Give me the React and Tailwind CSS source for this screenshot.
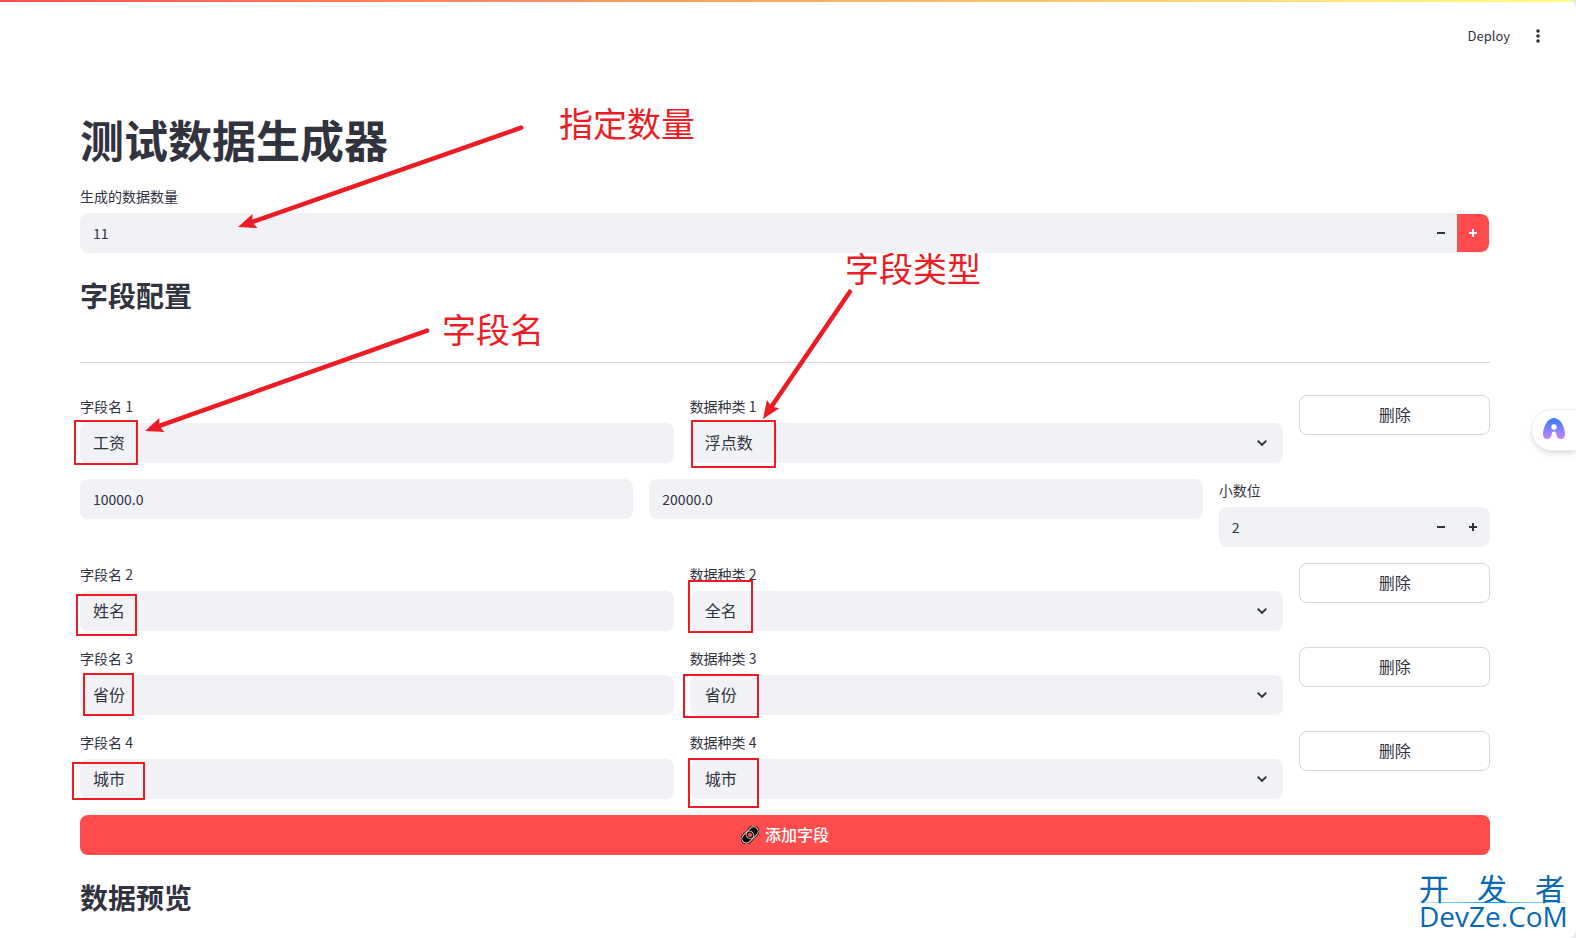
import React, { useState } from 'react';

const KINDS = ['浮点数', '全名', '省份', '城市'];

const INITIAL_FIELDS = [
    { id: 1, name: '工资', kind: '浮点数', min: '10000.0', max: '20000.0', digits: 2 },
    { id: 2, name: '姓名', kind: '全名' },
    { id: 3, name: '省份', kind: '省份' },
    { id: 4, name: '城市', kind: '城市' },
];

const MARK_BOXES = [
    { x: 74, y: 420, w: 64, h: 45 },
    { x: 691, y: 420, w: 85, h: 48 },
    { x: 76, y: 594, w: 61, h: 42 },
    { x: 688, y: 580, w: 65, h: 53 },
    { x: 83, y: 673, w: 51, h: 43 },
    { x: 683, y: 674, w: 76, h: 44 },
    { x: 72, y: 762, w: 73, h: 38 },
    { x: 688, y: 758, w: 71, h: 50 },
];

const MARK_ARROWS = [
    { from: [523, 127], to: [238, 227] },
    { from: [429, 330], to: [145, 431] },
    { from: [851, 290], to: [763, 419] },
];

const inputClass = 'h-10 w-full rounded-lg bg-[#f0f2f6] px-[13px] outline-none';

const Label = ({ htmlFor, children }) => (
    <label htmlFor={htmlFor} className="mb-1.5 block text-sm leading-[22px]">
        {children}
    </label>
);

const Stepper = ({ id, label, value, onChange, active }) => (
    <div>
        <Label htmlFor={id}>{label}</Label>
        <div className="flex h-10 overflow-hidden rounded-lg border border-[#f0f2f6] bg-[#f0f2f6]">
            <input
                id={id}
                type="text"
                inputMode="numeric"
                className="min-w-0 flex-1 bg-transparent px-3 text-sm outline-none"
                value={value}
                onChange={(e) => onChange(Number(e.target.value) || 0)}
            />
            <button
                type="button"
                aria-label="减少"
                className="flex w-8 items-center justify-center"
                onClick={() => onChange(value - 1)}
            >
                <svg width="8" height="8" viewBox="0 0 8 8" fill="currentColor">
                    <path d="M0 3h8v2H0z" />
                </svg>
            </button>
            <button
                type="button"
                aria-label="增加"
                className={active
                    ? 'flex w-8 items-center justify-center rounded-r-lg bg-[#ff4b4b] text-white'
                    : 'flex w-8 items-center justify-center'}
                onClick={() => onChange(value + 1)}
            >
                <svg width="8" height="8" viewBox="0 0 8 8" fill="currentColor">
                    <path d="M3 0h2v3h3v2H5v3H3V5H0V3h3z" />
                </svg>
            </button>
        </div>
    </div>
);

const FieldRow = ({ field, index, onChange, onRemove }) => (
    <div className="flex gap-4">
        <div className="min-w-0 flex-[1_1_calc(42.857%-16px)]">
            <Label htmlFor={`name-${field.id}`}>字段名 {index + 1}</Label>
            <input
                id={`name-${field.id}`}
                type="text"
                className={`${inputClass} pb-0.5`}
                value={field.name}
                onChange={(e) => onChange({ name: e.target.value })}
            />
        </div>
        <div className="min-w-0 flex-[1_1_calc(42.857%-16px)]">
            <Label htmlFor={`kind-${field.id}`}>数据种类 {index + 1}</Label>
            <div className="relative">
                <select
                    id={`kind-${field.id}`}
                    className="h-10 w-full appearance-none rounded-lg bg-[#f0f2f6] pr-10 pb-0.5 pl-[15px] outline-none"
                    value={field.kind}
                    onChange={(e) => onChange({ kind: e.target.value })}
                >
                    {KINDS.map((kind) => (
                        <option key={kind} value={kind}>{kind}</option>
                    ))}
                </select>
                <svg
                    className="pointer-events-none absolute top-4 right-4"
                    width="10"
                    height="8"
                    viewBox="0 0 10 8"
                    fill="none"
                    stroke="currentColor"
                    strokeWidth="2"
                >
                    <path d="M.7 1.600 5 5.900l4.300-4.300" />
                </svg>
            </div>
        </div>
        <div className="min-w-0 flex-[1_1_calc(14.286%-16px)]">
            <button
                type="button"
                className="h-10 w-full rounded-lg border border-[#d6d6d9] bg-white pb-0.5"
                onClick={onRemove}
            >
                删除
            </button>
        </div>
    </div>
);

const RangeRow = ({ field, onChange }) => (
    <div className="flex gap-4">
        <div className="min-w-0 flex-[1_1_calc(40%-16px)]">
            <input
                type="text"
                aria-label="最小值"
                className={`${inputClass} text-sm`}
                value={field.min}
                onChange={(e) => onChange({ min: e.target.value })}
            />
        </div>
        <div className="min-w-0 flex-[1_1_calc(40%-16px)]">
            <input
                type="text"
                aria-label="最大值"
                className={`${inputClass} text-sm`}
                value={field.max}
                onChange={(e) => onChange({ max: e.target.value })}
            />
        </div>
        <div className="min-w-0 flex-[1_1_calc(20%-16px)]">
            <Stepper
                id={`digits-${field.id}`}
                label="小数位"
                value={field.digits}
                onChange={(digits) => onChange({ digits })}
            />
        </div>
    </div>
);

const ChainIcon = () => (
    <svg className="mt-0.5" width="18" height="18" viewBox="0 0 18 18" fill="none">
        <g transform="rotate(-45 9 9)">
            <rect x="-1.800" y="3.200" width="14.500" height="11.600" rx="5.800" fill="#000" />
            <rect x="5.300" y="3.200" width="14.500" height="11.600" rx="5.800" fill="#000" />
            <rect x="-.6" y="4.500" width="13" height="9" rx="4.500" stroke="#d4d4d4" strokeWidth="1.100" />
            <rect x="5.600" y="4.500" width="13" height="9" rx="4.500" stroke="#d4d4d4" strokeWidth="1.100" />
            <circle cx="9" cy="9" r="2.700" fill="#ff4b4b" stroke="#000" strokeWidth=".8" />
        </g>
    </svg>
);

const Arrow = ({ from, to }) => {
    const dx = from[0] - to[0];
    const dy = from[1] - to[1];
    const length = Math.hypot(dx, dy);
    const angle = (Math.atan2(dy, dx) * 180) / Math.PI;

    return (
        <g transform={`translate(${to[0]} ${to[1]}) rotate(${angle})`}>
            <path d={`M13 0H${length - 2}`} stroke="#ed1c24" strokeWidth="4.500" strokeLinecap="round" />
            <path d="M0 0 18-7.500 15 0l3 7.500z" fill="#ed1c24" />
        </g>
    );
};

const Annotations = () => (
    <div className="pointer-events-none absolute inset-0 overflow-hidden text-[34px] leading-10 text-[#ed1c24]">
        <svg className="absolute inset-0 h-full w-full" fill="none">
            {MARK_BOXES.map((box) => (
                <rect
                    key={`${box.x}-${box.y}`}
                    x={box.x + 1}
                    y={box.y + 1}
                    width={box.w - 2}
                    height={box.h - 2}
                    stroke="#ed1c24"
                    strokeWidth="2"
                />
            ))}
            {MARK_ARROWS.map((arrow) => (
                <Arrow key={arrow.to[0]} from={arrow.from} to={arrow.to} />
            ))}
        </svg>
        <span className="absolute top-[103px] left-[559px]">指定数量</span>
        <span className="absolute top-[248px] left-[845px]">字段类型</span>
        <span className="absolute top-[309px] left-[442px]">字段名</span>
    </div>
);

const Assistant = () => (
    <button
        type="button"
        aria-label="助手"
        className="absolute top-[409px] right-0 flex h-[42px] w-[45px] items-center rounded-l-full border border-r-0 border-[#ececf4] bg-white pb-1 pl-[11px] shadow-md"
    >
        <svg width="22" height="21" viewBox="0 0 22 21">
            <defs>
                <linearGradient id="assistant" x1="0" y1="0" x2="0" y2="1">
                    <stop offset="0" stopColor="#2f7bff" />
                    <stop offset="1" stopColor="#c685ff" />
                </linearGradient>
            </defs>
            <path
                d="M11 0C5 0 0 8.500 0 16.500 0 19.500 1.800 21 4 21s4-1.500 4.500-4c.3-2.500.8-3.500 2.500-3.500s2.200 1 2.500 3.500c.5 2.500 2.300 4 4.500 4s4-1.500 4-4.500C22 8.500 17 0 11 0z"
                fill="url(#assistant)"
            />
            <circle cx="11" cy="9" r="2.700" fill="#fff" />
        </svg>
    </button>
);

const Watermark = () => (
    <div className="absolute right-[11px] bottom-[9px] w-[146px] text-[#0768b8]">
        <div className="flex justify-between text-[30px] leading-[30px]">
            <span>开</span>
            <span>发</span>
            <span>者</span>
        </div>
        <div className="h-px bg-gradient-to-r from-sky-200 via-sky-500 to-sky-200" />
        <div className="font-['Open_Sans',sans-serif] text-[28px] leading-[26px]">DevZe.CoM</div>
    </div>
);

const App = () => {
    const [count, setCount] = useState(11);
    const [fields, setFields] = useState(INITIAL_FIELDS);

    const updateField = (id, patch) => {
        setFields(fields.map((field) => (field.id === id ? { ...field, ...patch } : field)));
    };

    const removeField = (id) => {
        setFields(fields.filter((field) => field.id !== id));
    };

    const addField = () => {
        const id = Math.max(0, ...fields.map((field) => field.id)) + 1;
        setFields([...fields, { id, name: '', kind: '全名' }]);
    };

    return (
        <div className="bg-gray-200">
            <div className="relative min-h-screen overflow-hidden rounded-r-lg bg-white font-['Noto_Sans_CJK_SC',sans-serif] text-base text-[#31333f]">
                <div className="h-[2px] bg-gradient-to-r from-[#ff4b4b] to-[#fffd80]" />
                <header className="flex h-[67px] items-center justify-end gap-6 pr-[34px]">
                    <button type="button" className="text-[13px]">Deploy</button>
                    <button type="button" aria-label="菜单">
                        <svg width="8" height="14" viewBox="0 0 8 14" fill="currentColor">
                            <circle cx="4" cy="2" r="1.800" />
                            <circle cx="4" cy="7" r="1.800" />
                            <circle cx="4" cy="12" r="1.800" />
                        </svg>
                    </button>
                </header>

                <main className="pt-[42px] pr-[86px] pl-20">
                    <h1 className="mb-[18px] text-[44px] leading-14 font-bold">测试数据生成器</h1>
                    <Stepper id="count" label="生成的数据数量" value={count} onChange={setCount} active />

                    <h2 className="mt-6 text-[28px] leading-9 font-bold">字段配置</h2>
                    <hr className="mt-[49px] mb-8 border-[#d6d6d9]" />

                    <div className="flex flex-col gap-4">
                        {fields.map((field, index) => (
                            <React.Fragment key={field.id}>
                                <FieldRow
                                    field={field}
                                    index={index}
                                    onChange={(patch) => updateField(field.id, patch)}
                                    onRemove={() => removeField(field.id)}
                                />
                                {field.min !== undefined && (
                                    <RangeRow field={field} onChange={(patch) => updateField(field.id, patch)} />
                                )}
                            </React.Fragment>
                        ))}
                        <button
                            type="button"
                            className="flex h-10 w-full items-center justify-center gap-1.5 rounded-lg bg-[#ff4b4b] pb-0.5 font-medium text-white"
                            onClick={addField}
                        >
                            <ChainIcon />
                            添加字段
                        </button>
                    </div>

                    <h2 className="mt-6 text-[28px] leading-9 font-bold">数据预览</h2>
                </main>

                <Annotations />
                <Assistant />
                <Watermark />
            </div>
        </div>
    );
};

export default App;
